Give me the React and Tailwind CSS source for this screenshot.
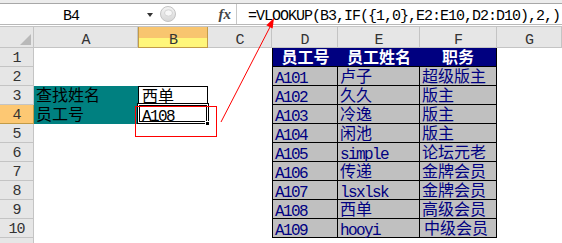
import React from 'react';

const latinCls = "font-['Liberation_Mono',monospace] text-[16px] tracking-[-1.6px] leading-[14px] pt-[5px]";
const cjkCls = "font-['Noto_Sans_CJK_SC',sans-serif] text-[16px] leading-[16px] pt-0";

const isAscii = (s) => /^[\x00-\x7f]*$/.test(s);

function T({ text, extra = '' }) {
  return <div className={`${isAscii(text) ? latinCls : cjkCls} whitespace-nowrap ${extra}`}>{text}</div>;
}

const table = [
  ['A101', '卢子', '超级版主'],
  ['A102', '久久', '版主'],
  ['A103', '冷逸', '版主'],
  ['A104', '闲池', '版主'],
  ['A105', 'simple', '论坛元老'],
  ['A106', '传递', '金牌会员'],
  ['A107', 'lsxlsk', '金牌会员'],
  ['A108', '西单', '高级会员'],
  ['A109', 'hooyi', '中级会员'],
];

const headCls = "font-['Liberation_Mono',monospace] text-[15px] tracking-[-1px] leading-[12px] text-[#333]";

function ColHead({ label, active }) {
  return active ? (
    <div className={`bg-linear-to-b from-[#f8c56f] from-55% to-[#fff67a] to-55% border-l border-r border-b border-[#c29b47] flex justify-center pt-[8px] ${headCls}`}>{label}</div>
  ) : (
    <div className={`bg-[#e6e6e6] border-r border-b border-[#c4c4c4] flex justify-center pt-[8px] ${headCls}`}>{label}</div>
  );
}

function RowHead({ n, active }) {
  return active ? (
    <div className={`bg-[#fdc873] border-r border-b border-[#c29b47] flex justify-center pt-[5px] ${headCls}`}>{n}</div>
  ) : (
    <div className={`bg-[#e6e6e6] border-r border-b border-[#c4c4c4] flex justify-center pt-[5px] ${headCls}`}>{n}</div>
  );
}

export default function App() {
  const cells = [];
  cells.push(
    <div key="corner" className="bg-[#e6e6e6] border-r border-b border-[#c4c4c4] flex items-end justify-end pr-[2px] pb-[2px]">
      <div className="w-[11px] h-[11px] bg-[#b9b9b9] [clip-path:polygon(100%_0,100%_100%,0_100%)]" />
    </div>
  );
  ['A', 'B', 'C', 'D', 'E', 'F', 'G'].forEach((c) => cells.push(<ColHead key={'h' + c} label={c} active={c === 'B'} />));

  for (let r = 1; r <= 11; r++) {
    cells.push(<RowHead key={'r' + r} n={r <= 10 ? r : ''} active={r === 4} />);
    if (r === 3) cells.push(<div key={'a' + r} className="bg-[#008080] text-black pl-[2px]"><T text="查找姓名" /></div>);
    else if (r === 4) cells.push(<div key={'a' + r} className="bg-[#008080] text-black pl-[2px]"><T text="员工号" /></div>);
    else cells.push(<div key={'a' + r} />);
    if (r === 3) cells.push(<div key={'b' + r} className="border border-black bg-white text-black pl-[3px]"><T text="西单" /></div>);
    else if (r === 4)
      cells.push(
        <div key={'b' + r} className="relative bg-white text-black pl-[4px]">
          <T text="A108" />
          <div className="absolute -left-px -top-[2px] -right-px bottom-0 border border-black shadow-[inset_0_0_0_1px_white,inset_0_0_0_2px_black]" />
          <div className="absolute left-[67px] top-[16px] w-[5px] h-[5px] bg-black border border-white" />
        </div>
      );
    else cells.push(<div key={'b' + r} />);
    cells.push(<div key={'c' + r} />);
    if (r === 1) {
      const hb = "bg-[#000080] text-white font-bold border-b border-black flex justify-center";
      cells.push(<div key="d1" className={`${hb} border-l`}><T text="员工号" /></div>);
      cells.push(<div key="e1" className={hb}><T text="员工姓名" /></div>);
      cells.push(<div key="f1" className={`${hb} border-r`}><T text="职务" /></div>);
    } else if (r <= 10) {
      const row = table[r - 2];
      const db = "bg-[#c0c0c0] text-[#000080] border-r border-b border-black pl-[2px]";
      cells.push(<div key={'d' + r} className={`${db} border-l`}><T text={row[0]} /></div>);
      cells.push(<div key={'e' + r} className={db}><T text={row[1]} /></div>);
      cells.push(<div key={'f' + r} className={db}><T text={row[2]} extra={r === 10 ? 'pl-[2px]' : ''} /></div>);
    } else {
      cells.push(<div key={'d' + r} />);
      cells.push(<div key={'e' + r} />);
      cells.push(<div key={'f' + r} />);
    }
    cells.push(<div key={'g' + r} />);
  }

  return (
    <div className="relative w-[562px] h-[243px] overflow-hidden bg-white">
      <div className="h-[4px] bg-[#ececec] border-b border-[#a8a8a8]" />
      <div className="flex h-[21px] bg-white border-b border-[#b8b8b8]">
        <div className={`w-[142px] flex justify-center pt-[7px] text-black ${headCls}`}>B4</div>
        <div className="w-[16px] flex items-center justify-center">
          <div className="w-0 h-0 border-l-[3px] border-r-[3px] border-t-[4px] border-l-transparent border-r-transparent border-t-[#333] mt-[2px]" />
        </div>
        <div className="w-[20px] flex items-center pl-[2px]">
          <svg width="16" height="16" viewBox="0 0 16 16">
            <defs>
              <linearGradient id="g1" x1="0" y1="0" x2="0" y2="1">
                <stop offset="0" stopColor="#f4f4f4" />
                <stop offset="1" stopColor="#d6d6d6" />
              </linearGradient>
            </defs>
            <circle cx="8" cy="8" r="7.5" fill="url(#g1)" stroke="#c3c3c3" />
            <ellipse cx="8.5" cy="7" rx="4" ry="3.2" fill="#f7f7f7" stroke="#d4d4d4" />
          </svg>
        </div>
        <div className="w-[58px] flex justify-end pr-[5px] pt-[3px] font-['Liberation_Serif',serif] italic font-bold text-[15px] leading-[15px] text-[#444]">fx</div>
        <div className={`flex-1 border-l border-[#c8c8c8] pl-[11px] pt-[7px] text-black whitespace-nowrap ${headCls}`}>
          =VLOOKUP(B3,IF({'{'}1,0{'}'},E2:E10,D2:D10),2,)
        </div>
      </div>
      <div className="h-[2px] bg-white border-b border-[#c4c4c4]" />
      <div className="grid grid-cols-[34px_104px_70px_64px_66px_82px_77px_65px] grid-rows-[21px_repeat(11,19px)]">
        {cells}
      </div>
      <div className="absolute left-[135px] top-[106px] w-[82px] h-[31px] border border-[#ff0000] pointer-events-none" />
      <svg className="absolute left-0 top-0 pointer-events-none" width="562" height="243" viewBox="0 0 562 243">
        <line x1="221" y1="122" x2="270" y2="27" stroke="#ff0000" strokeWidth="1" />
        <polygon points="274,18 272.6,28.5 266.3,25.3" fill="#ff0000" />
      </svg>
    </div>
  );
}
